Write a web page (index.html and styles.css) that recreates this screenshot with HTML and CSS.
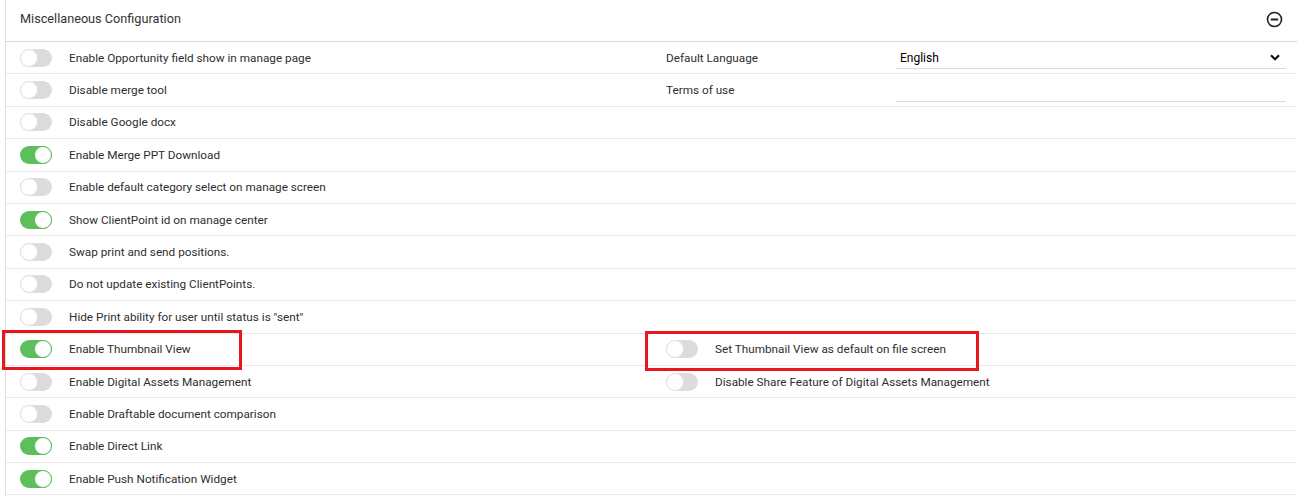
FILE: index.html
```html
<!DOCTYPE html>
<html lang="en">
<head>
  <meta charset="UTF-8">
  <title>Miscellaneous Configuration</title>
  <link rel="stylesheet" href="styles.css">
</head>
<body>
  <div class="panel">
    <div class="panel-head">
      <span class="panel-title">Miscellaneous Configuration</span>
      <svg class="collapse-icon" width="17" height="17" viewBox="0 0 17 17">
        <circle cx="8.5" cy="8.5" r="7" fill="none" stroke="#222" stroke-width="1.6"/>
        <line x1="4.8" y1="8.5" x2="12.2" y2="8.5" stroke="#222" stroke-width="2"/>
      </svg>
    </div>

    <div class="row">
      <div class="cell"><span class="toggle"></span><span class="label">Enable Opportunity field show in manage page</span></div>
      <div class="cell">
        <span class="field-label">Default Language</span>
        <div class="field select">
          <span>English</span>
          <svg width="10" height="7" viewBox="0 0 10 7"><path d="M1 1.2 L5 5.2 L9 1.2" fill="none" stroke="#111" stroke-width="2.2"/></svg>
        </div>
      </div>
    </div>
    <div class="row">
      <div class="cell"><span class="toggle"></span><span class="label">Disable merge tool</span></div>
      <div class="cell">
        <span class="field-label">Terms of use</span>
        <div class="field"></div>
      </div>
    </div>
    <div class="row">
      <div class="cell"><span class="toggle"></span><span class="label">Disable Google docx</span></div>
      <div class="cell"></div>
    </div>
    <div class="row">
      <div class="cell"><span class="toggle on"></span><span class="label">Enable Merge PPT Download</span></div>
      <div class="cell"></div>
    </div>
    <div class="row">
      <div class="cell"><span class="toggle"></span><span class="label">Enable default category select on manage screen</span></div>
      <div class="cell"></div>
    </div>
    <div class="row">
      <div class="cell"><span class="toggle on"></span><span class="label">Show ClientPoint id on manage center</span></div>
      <div class="cell"></div>
    </div>
    <div class="row">
      <div class="cell"><span class="toggle"></span><span class="label">Swap print and send positions.</span></div>
      <div class="cell"></div>
    </div>
    <div class="row">
      <div class="cell"><span class="toggle"></span><span class="label">Do not update existing ClientPoints.</span></div>
      <div class="cell"></div>
    </div>
    <div class="row">
      <div class="cell"><span class="toggle"></span><span class="label">Hide Print ability for user until status is "sent"</span></div>
      <div class="cell"></div>
    </div>
    <div class="row">
      <div class="cell mark-left"><span class="toggle on"></span><span class="label">Enable Thumbnail View</span></div>
      <div class="cell mark-right"><span class="toggle"></span><span class="label">Set Thumbnail View as default on file screen</span></div>
    </div>
    <div class="row">
      <div class="cell"><span class="toggle"></span><span class="label">Enable Digital Assets Management</span></div>
      <div class="cell"><span class="toggle"></span><span class="label">Disable Share Feature of Digital Assets Management</span></div>
    </div>
    <div class="row">
      <div class="cell"><span class="toggle"></span><span class="label">Enable Draftable document comparison</span></div>
      <div class="cell"></div>
    </div>
    <div class="row">
      <div class="cell"><span class="toggle on"></span><span class="label">Enable Direct Link</span></div>
      <div class="cell"></div>
    </div>
    <div class="row">
      <div class="cell"><span class="toggle on"></span><span class="label">Enable Push Notification Widget</span></div>
      <div class="cell"></div>
    </div>
  </div>
</body>
</html>
```

FILE: styles.css
```css
body {
  margin: 0;
  font-family: Roboto, "Liberation Sans", Arial, sans-serif;
  font-size: 11.75px;
  color: #2e2e2e;
  background-color: #fff;
}

.panel {
  margin-left: 5px;
  border-left: 1px solid #dedede;
  min-height: 496px;
}

.panel-head {
  display: flex;
  align-items: center;
  justify-content: space-between;
  height: 42px;
  padding: 0 14px 4px 14px;
  box-sizing: border-box;
  border-bottom: 1px solid #d9d9d9;
}

.panel-title {
  font-size: 12.7px;
  color: #333;
}

.collapse-icon {
  margin-top: 2px;
}

.row {
  display: grid;
  grid-template-columns: 646px 1fr;
  height: 32.4px;
  box-sizing: border-box;
  border-bottom: 1px solid #e8e8e8;
}

.cell {
  display: flex;
  align-items: center;
  padding-left: 14px;
  position: relative;
}

.toggle {
  position: relative;
  width: 32px;
  height: 18px;
  border-radius: 9px;
  background-color: #dcdcdc;
  flex-shrink: 0;
  margin-right: 17px;
}

.toggle::after {
  content: "";
  position: absolute;
  top: 0;
  left: 0;
  width: 16px;
  height: 16px;
  border-radius: 50%;
  background-color: #fff;
  border: 1px solid #e2e2e2;
}

.toggle.on {
  background-color: #5cbf5c;
}

.toggle.on::after {
  left: 14px;
  border-color: #5cbf5c;
}

.label {
  white-space: nowrap;
}

.field-label {
  width: 230px;
}

.field {
  display: flex;
  align-items: center;
  justify-content: space-between;
  width: 390px;
  height: 22px;
  margin-top: 1px;
  padding: 0 6px 0 4px;
  box-sizing: border-box;
  border-bottom: 1px solid #dcdcdc;
}

.field.select span {
  color: #000;
  font-size: 12px;
}

.mark-left::after,
.mark-right::after {
  content: "";
  position: absolute;
  border: 3px solid #e8161e;
  box-sizing: border-box;
}

.mark-left::after {
  left: -4px;
  top: -4px;
  width: 240px;
  height: 40px;
}

.mark-right::after {
  left: -7px;
  top: -3px;
  width: 334px;
  height: 40px;
}
```
